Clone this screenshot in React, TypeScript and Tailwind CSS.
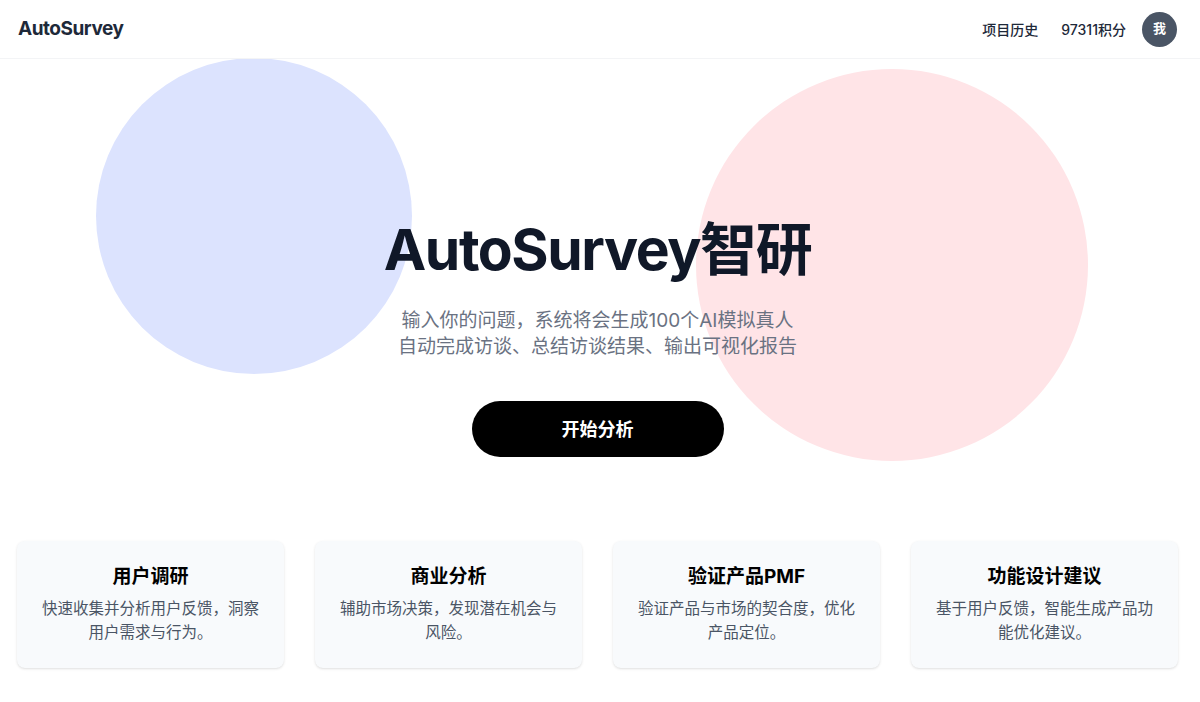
const features = [
  { title: "用户调研", desc: "快速收集并分析用户反馈，洞察用户需求与行为。" },
  { title: "商业分析", desc: "辅助市场决策，发现潜在机会与风险。" },
  { title: "验证产品PMF", desc: "验证产品与市场的契合度，优化产品定位。" },
  { title: "功能设计建议", desc: "基于用户反馈，智能生成产品功能优化建议。" },
];

export default function App() {
  return (
    <div
      className="min-h-screen w-full bg-white overflow-hidden"
      style={{ fontFamily: 'Inter, "Noto Sans CJK SC", sans-serif' }}
    >
      <header className="relative z-10 flex h-[59px] items-center justify-between border-b border-gray-100 bg-white pl-[18px] pr-[23px]">
        <div className="text-[19px] font-bold tracking-tight text-gray-800">AutoSurvey</div>
        <nav className="flex items-center">
          <a className="text-[14px] font-medium text-gray-800">项目历史</a>
          <span className="ml-[23px] text-[14px] font-medium text-gray-800">97311积分</span>
          <div className="ml-[16px] flex h-[35px] w-[35px] items-center justify-center rounded-full bg-gray-600 text-[13px] font-semibold text-white">
            我
          </div>
        </nav>
      </header>

      <section className="relative flex h-[482px] flex-col items-center pr-[5px]">
        <div className="absolute left-[96px] top-[-1px] h-[316px] w-[316px] rounded-full bg-[#dce3fe]" />
        <div className="absolute left-[696px] top-[10px] h-[392px] w-[392px] rounded-full bg-[#ffe4e7]" />

        <h1 className="relative mt-[158px] text-[57px] font-bold leading-[66px] tracking-tight text-gray-900">
          AutoSurvey智研
        </h1>
        <p className="relative mt-[25px] text-center text-[19px] leading-[26px] text-gray-500">
          输入你的问题，系统将会生成100个AI模拟真人
          <br />
          自动完成访谈、总结访谈结果、输出可视化报告
        </p>
        <button className="relative mt-[41px] flex h-[56px] w-[252px] items-center justify-center rounded-full bg-black text-[18px] font-semibold text-white">
          开始分析
        </button>
      </section>

      <section className="grid grid-cols-[repeat(4,267px)] gap-[31px] px-[17px]">
        {features.map((f) => (
          <div
            key={f.title}
            className="flex h-[127px] flex-col items-center rounded-lg bg-slate-50 px-6 pt-[22px] shadow-sm"
          >
            <h3 className="text-[19px] font-bold leading-[28px] text-black">{f.title}</h3>
            <p className="mt-[6px] text-center text-[15.5px] leading-[24px] text-gray-600">{f.desc}</p>
          </div>
        ))}
      </section>
    </div>
  );
}
